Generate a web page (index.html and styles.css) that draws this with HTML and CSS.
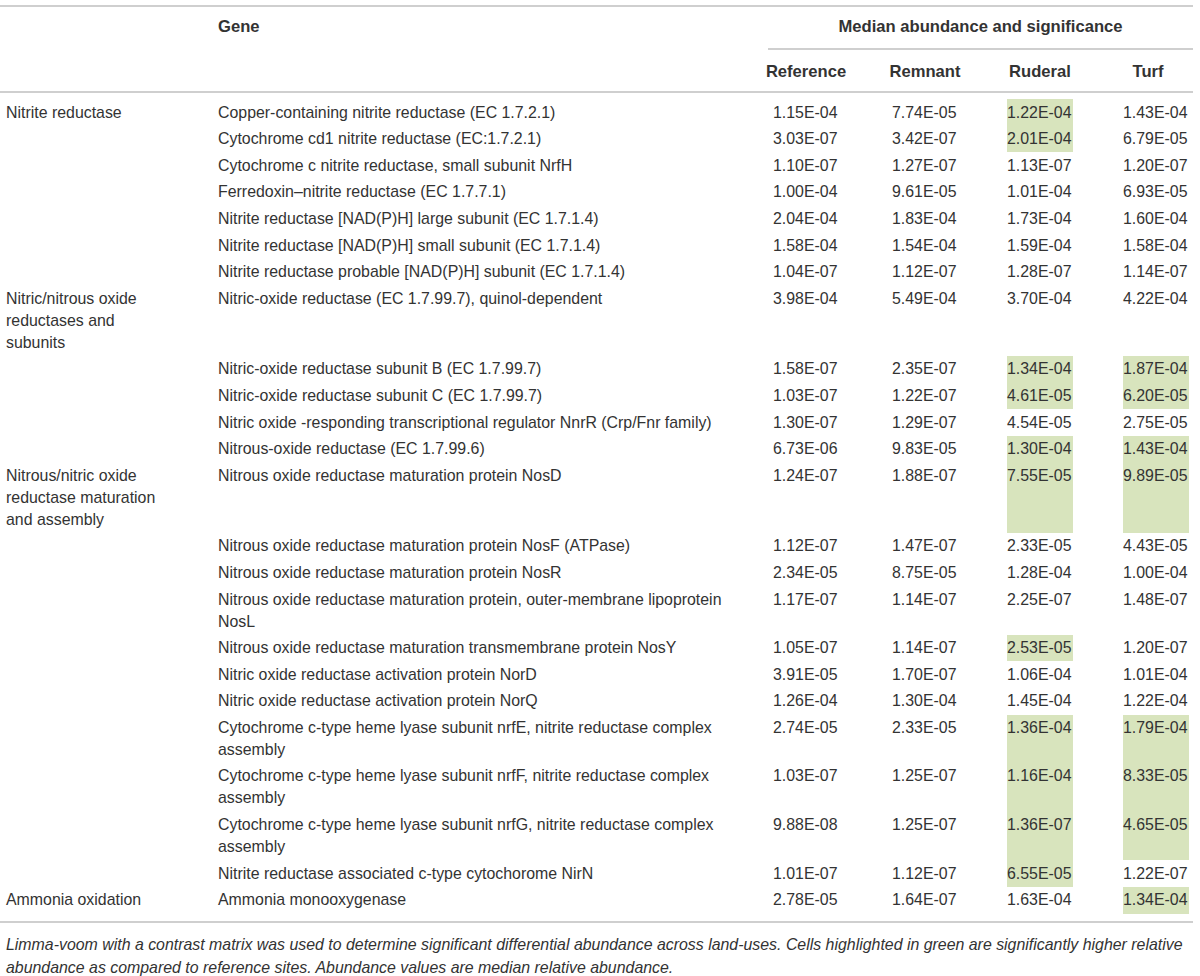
FILE: index.html
```html
<!DOCTYPE html>
<html lang="en">
<head>
<meta charset="utf-8">
<title>Median abundance table</title>
<link rel="stylesheet" href="styles.css">
</head>
<body>
<div class="table">
  <div class="head">
    <div class="h-gene">Gene</div>
    <div class="h-median">Median abundance and significance</div>
    <div class="h-sub c3"><span>Reference</span></div>
    <div class="h-sub c4"><span>Remnant</span></div>
    <div class="h-sub c5"><span>Ruderal</span></div>
    <div class="h-sub c6 h-turf"><span>Turf</span></div>
  </div>
  <div class="body">
    <div class="grp">Nitrite reductase</div><div class="gene">Copper-containing nitrite reductase (EC 1.7.2.1)</div><div class="v">1.15E-04</div><div class="v">7.74E-05</div><div class="v hl">1.22E-04</div><div class="v">1.43E-04</div>
    <div class="grp"></div><div class="gene">Cytochrome cd1 nitrite reductase (EC:1.7.2.1)</div><div class="v">3.03E-07</div><div class="v">3.42E-07</div><div class="v hl">2.01E-04</div><div class="v">6.79E-05</div>
    <div class="grp"></div><div class="gene">Cytochrome c nitrite reductase, small subunit NrfH</div><div class="v">1.10E-07</div><div class="v">1.27E-07</div><div class="v">1.13E-07</div><div class="v">1.20E-07</div>
    <div class="grp"></div><div class="gene">Ferredoxin–nitrite reductase (EC 1.7.7.1)</div><div class="v">1.00E-04</div><div class="v">9.61E-05</div><div class="v">1.01E-04</div><div class="v">6.93E-05</div>
    <div class="grp"></div><div class="gene">Nitrite reductase [NAD(P)H] large subunit (EC 1.7.1.4)</div><div class="v">2.04E-04</div><div class="v">1.83E-04</div><div class="v">1.73E-04</div><div class="v">1.60E-04</div>
    <div class="grp"></div><div class="gene">Nitrite reductase [NAD(P)H] small subunit (EC 1.7.1.4)</div><div class="v">1.58E-04</div><div class="v">1.54E-04</div><div class="v">1.59E-04</div><div class="v">1.58E-04</div>
    <div class="grp"></div><div class="gene">Nitrite reductase probable [NAD(P)H] subunit (EC 1.7.1.4)</div><div class="v">1.04E-07</div><div class="v">1.12E-07</div><div class="v">1.28E-07</div><div class="v">1.14E-07</div>

    <div class="grp">Nitric/nitrous oxide reductases and subunits</div><div class="gene">Nitric-oxide reductase (EC 1.7.99.7), quinol-dependent</div><div class="v">3.98E-04</div><div class="v">5.49E-04</div><div class="v">3.70E-04</div><div class="v">4.22E-04</div>
    <div class="grp"></div><div class="gene">Nitric-oxide reductase subunit B (EC 1.7.99.7)</div><div class="v">1.58E-07</div><div class="v">2.35E-07</div><div class="v hl">1.34E-04</div><div class="v hl">1.87E-04</div>
    <div class="grp"></div><div class="gene">Nitric-oxide reductase subunit C (EC 1.7.99.7)</div><div class="v">1.03E-07</div><div class="v">1.22E-07</div><div class="v hl">4.61E-05</div><div class="v hl">6.20E-05</div>
    <div class="grp"></div><div class="gene">Nitric oxide -responding transcriptional regulator NnrR (Crp/Fnr family)</div><div class="v">1.30E-07</div><div class="v">1.29E-07</div><div class="v">4.54E-05</div><div class="v">2.75E-05</div>
    <div class="grp"></div><div class="gene">Nitrous-oxide reductase (EC 1.7.99.6)</div><div class="v">6.73E-06</div><div class="v">9.83E-05</div><div class="v hl">1.30E-04</div><div class="v hl">1.43E-04</div>

    <div class="grp">Nitrous/nitric oxide reductase maturation and assembly</div><div class="gene">Nitrous oxide reductase maturation protein NosD</div><div class="v">1.24E-07</div><div class="v">1.88E-07</div><div class="v hl">7.55E-05</div><div class="v hl">9.89E-05</div>
    <div class="grp"></div><div class="gene">Nitrous oxide reductase maturation protein NosF (ATPase)</div><div class="v">1.12E-07</div><div class="v">1.47E-07</div><div class="v">2.33E-05</div><div class="v">4.43E-05</div>
    <div class="grp"></div><div class="gene">Nitrous oxide reductase maturation protein NosR</div><div class="v">2.34E-05</div><div class="v">8.75E-05</div><div class="v">1.28E-04</div><div class="v">1.00E-04</div>
    <div class="grp"></div><div class="gene">Nitrous oxide reductase maturation protein, outer-membrane lipoprotein NosL</div><div class="v">1.17E-07</div><div class="v">1.14E-07</div><div class="v">2.25E-07</div><div class="v">1.48E-07</div>
    <div class="grp"></div><div class="gene">Nitrous oxide reductase maturation transmembrane protein NosY</div><div class="v">1.05E-07</div><div class="v">1.14E-07</div><div class="v hl">2.53E-05</div><div class="v">1.20E-07</div>
    <div class="grp"></div><div class="gene">Nitric oxide reductase activation protein NorD</div><div class="v">3.91E-05</div><div class="v">1.70E-07</div><div class="v">1.06E-04</div><div class="v">1.01E-04</div>
    <div class="grp"></div><div class="gene">Nitric oxide reductase activation protein NorQ</div><div class="v">1.26E-04</div><div class="v">1.30E-04</div><div class="v">1.45E-04</div><div class="v">1.22E-04</div>
    <div class="grp"></div><div class="gene">Cytochrome c-type heme lyase subunit nrfE, nitrite reductase complex assembly</div><div class="v">2.74E-05</div><div class="v">2.33E-05</div><div class="v hl">1.36E-04</div><div class="v hl">1.79E-04</div>
    <div class="grp"></div><div class="gene">Cytochrome c-type heme lyase subunit nrfF, nitrite reductase complex assembly</div><div class="v">1.03E-07</div><div class="v">1.25E-07</div><div class="v hl">1.16E-04</div><div class="v hl">8.33E-05</div>
    <div class="grp"></div><div class="gene">Cytochrome c-type heme lyase subunit nrfG, nitrite reductase complex assembly</div><div class="v">9.88E-08</div><div class="v">1.25E-07</div><div class="v hl">1.36E-07</div><div class="v hl">4.65E-05</div>
    <div class="grp"></div><div class="gene">Nitrite reductase associated c-type cytochorome NirN</div><div class="v">1.01E-07</div><div class="v">1.12E-07</div><div class="v hl">6.55E-05</div><div class="v">1.22E-07</div>

    <div class="grp">Ammonia oxidation</div><div class="gene">Ammonia monooxygenase</div><div class="v">2.78E-05</div><div class="v">1.64E-07</div><div class="v">1.63E-04</div><div class="v hl">1.34E-04</div>
  </div>
  <p class="caption">Limma-voom with a contrast matrix was used to determine significant differential abundance across land-uses. Cells highlighted in green are significantly higher relative abundance as compared to reference sites. Abundance values are median relative abundance.</p>
</div>
</body>
</html>
```

FILE: styles.css
```css
html, body {
  margin: 0;
  padding: 0;
  background: #ffffff;
}

body {
  font-family: "Liberation Sans", Arial, Helvetica, sans-serif;
  font-size: 15.9px;
  line-height: 22px;
  color: #333333;
}

.table {
  width: 1193px;
  margin-top: 5px;
}

.head,
.body {
  display: grid;
  grid-template-columns: 212px 561px 119px 115px 116px 70px;
}

.head {
  border-top: 2px solid #cfcfcf;
  border-bottom: 2px solid #cfcfcf;
  font-weight: bold;
  font-size: 16.6px;
}

.h-gene {
  grid-column: 2;
  grid-row: 1;
  padding: 8.5px 0 10.5px 6px;
}

.h-median {
  grid-column: 3 / span 4;
  grid-row: 1;
  margin-left: -5px;
  padding: 8.5px 0 10.5px 0;
  text-align: center;
  border-bottom: 2px solid #cfcfcf;
}

.h-sub {
  grid-row: 2;
  width: 66px;
  display: flex;
  justify-content: center;
  white-space: nowrap;
  padding: 10.5px 0 8.5px 0;
}

.c3 { grid-column: 3; }
.c4 { grid-column: 4; }
.c5 { grid-column: 5; }
.c6 { grid-column: 6; }

.h-turf {
  margin-left: -8px;
}

.body {
  padding: 6.3px 0 7px 0;
  border-bottom: 2px solid #cfcfcf;
}

.grp {
  padding: 2.3px 46px 2.3px 6px;
}

.gene {
  padding: 2.3px 50px 2.3px 6px;
}

.v {
  justify-self: start;
  padding: 2.3px 1px 2.3px 0;
  white-space: nowrap;
}

.hl {
  background: #d8e4bd;
}

.caption {
  margin: 0 -6px 0 0;
  padding: 10px 0 0 6px;
  font-style: italic;
  font-size: 15.9px;
  line-height: 23px;
}
```
